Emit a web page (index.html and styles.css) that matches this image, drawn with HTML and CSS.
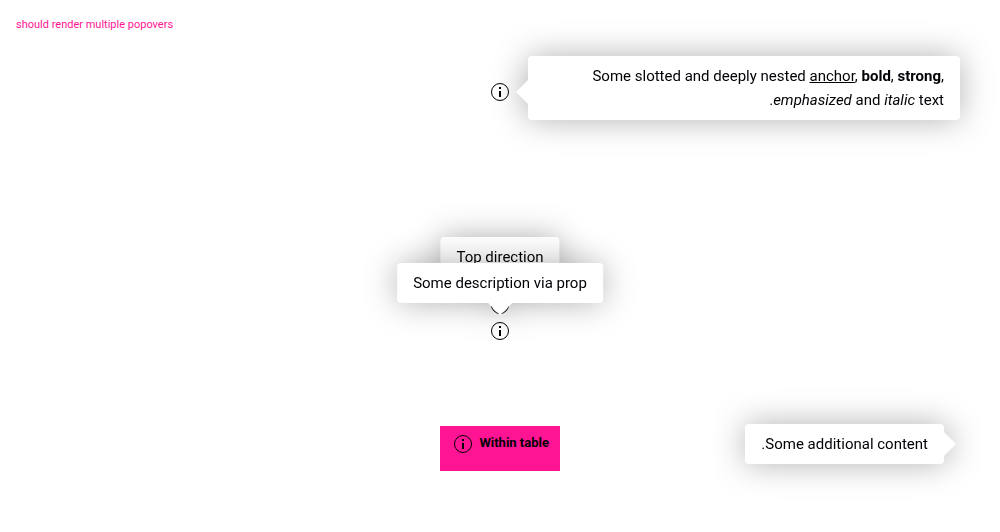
FILE: index.html
```html
<!DOCTYPE html>
<html lang="en">
<head>
<meta charset="utf-8">
<meta name="viewport" content="width=device-width, initial-scale=1">
<title>Popovers</title>
<link rel="stylesheet" href="styles.css">
</head>
<body>
<svg class="sprite" aria-hidden="true">
  <symbol id="info" viewBox="0 0 24 24">
    <circle cx="12" cy="12" r="8.5" fill="none" stroke="currentColor"/>
    <path d="M11 7h2v2h-2zM11 11h2v6h-2z" fill="currentColor"/>
  </symbol>
</svg>
<p class="title">should render multiple popovers</p>
<main class="playground" dir="rtl">
  <div class="popover">
    <button class="trigger" type="button" aria-label="More information"><svg class="icon"><use href="#info"/></svg></button>
    <div class="bubble bubble-right">Some slotted and deeply nested <a class="link" href="#">anchor</a>, <b>bold</b>, <strong>strong</strong>, <em>emphasized</em> and <i>italic</i> text.</div>
  </div>
  <div class="stack">
    <div class="popover">
      <button class="trigger" type="button" aria-label="More information"><svg class="icon"><use href="#info"/></svg></button>
      <div class="bubble bubble-top">Top direction</div>
    </div>
    <div class="popover">
      <button class="trigger" type="button" aria-label="More information"><svg class="icon"><use href="#info"/></svg></button>
      <div class="bubble bubble-top">Some description via prop</div>
    </div>
  </div>
  <div class="table-row">
    <table class="table">
      <tr>
        <th class="cell" scope="col">
          <div class="cell-content">
            <span>Within table</span>
            <button class="trigger" type="button" aria-label="More information"><svg class="icon"><use href="#info"/></svg></button>
          </div>
        </th>
      </tr>
    </table>
    <div class="bubble bubble-left">Some additional content.</div>
  </div>
</main>
</body>
</html>
```
FILE: styles.css
```css
* {
  box-sizing: border-box;
}

body {
  min-height: 100vh;
  margin: 0;
  padding: 16px;
  background: #fff;
  color: #010205;
  font: 15px/24px Roboto, "Liberation Sans", sans-serif;
}

.sprite {
  position: absolute;
  width: 0;
  height: 0;
}

.title {
  margin: 0;
  color: #ff1493;
  font-size: 11px;
  line-height: 18px;
}

.playground {
  display: flex;
  flex-direction: column;
  align-items: center;
  padding-top: 46px;
}

.stack {
  display: flex;
  flex-direction: column;
  gap: 2px;
  margin-top: 189px;
}

.popover {
  position: relative;
  width: 24px;
  height: 24px;
}

.trigger {
  display: block;
  flex: none;
  width: 24px;
  height: 24px;
  padding: 0;
  border: 0;
  background: none;
  color: inherit;
}

.icon {
  display: block;
  width: 24px;
  height: 24px;
}

.bubble {
  position: absolute;
  z-index: 1;
  width: max-content;
  max-width: 432px;
  padding: 8px 16px;
  border-radius: 4px;
  background: #fff;
  filter: drop-shadow(0 0 16px rgba(0, 0, 0, 0.3));
}

.bubble::before {
  content: "";
  position: absolute;
  border: 12px solid transparent;
}

.bubble-right {
  top: -24px;
  left: 40px;
}

.bubble-right::before {
  top: 24px;
  right: 100%;
  border-left-width: 0;
  border-right-color: #fff;
}

.bubble-top {
  bottom: 40px;
  left: 50%;
  transform: translateX(-50%);
}

.bubble-top::before {
  top: 100%;
  left: calc(50% - 12px);
  border-bottom-width: 0;
  border-top-color: #fff;
}

.bubble-left {
  top: -2px;
  right: 40px;
}

.bubble-left::before {
  top: calc(50% - 12px);
  left: 100%;
  border-right-width: 0;
  border-left-color: #fff;
}

.link {
  color: inherit;
  text-decoration: underline;
}

.table-row {
  position: relative;
  display: flex;
  justify-content: center;
  align-self: stretch;
  margin-top: 83px;
}

.table {
  width: 120px;
  border-collapse: collapse;
  background: #ff1493;
}

.cell {
  height: 45px;
  padding: 6px 11px;
  font-size: 13px;
  line-height: 22px;
  text-align: start;
  vertical-align: top;
}

.cell-content {
  display: flex;
  gap: 4px;
  white-space: nowrap;
}
```
